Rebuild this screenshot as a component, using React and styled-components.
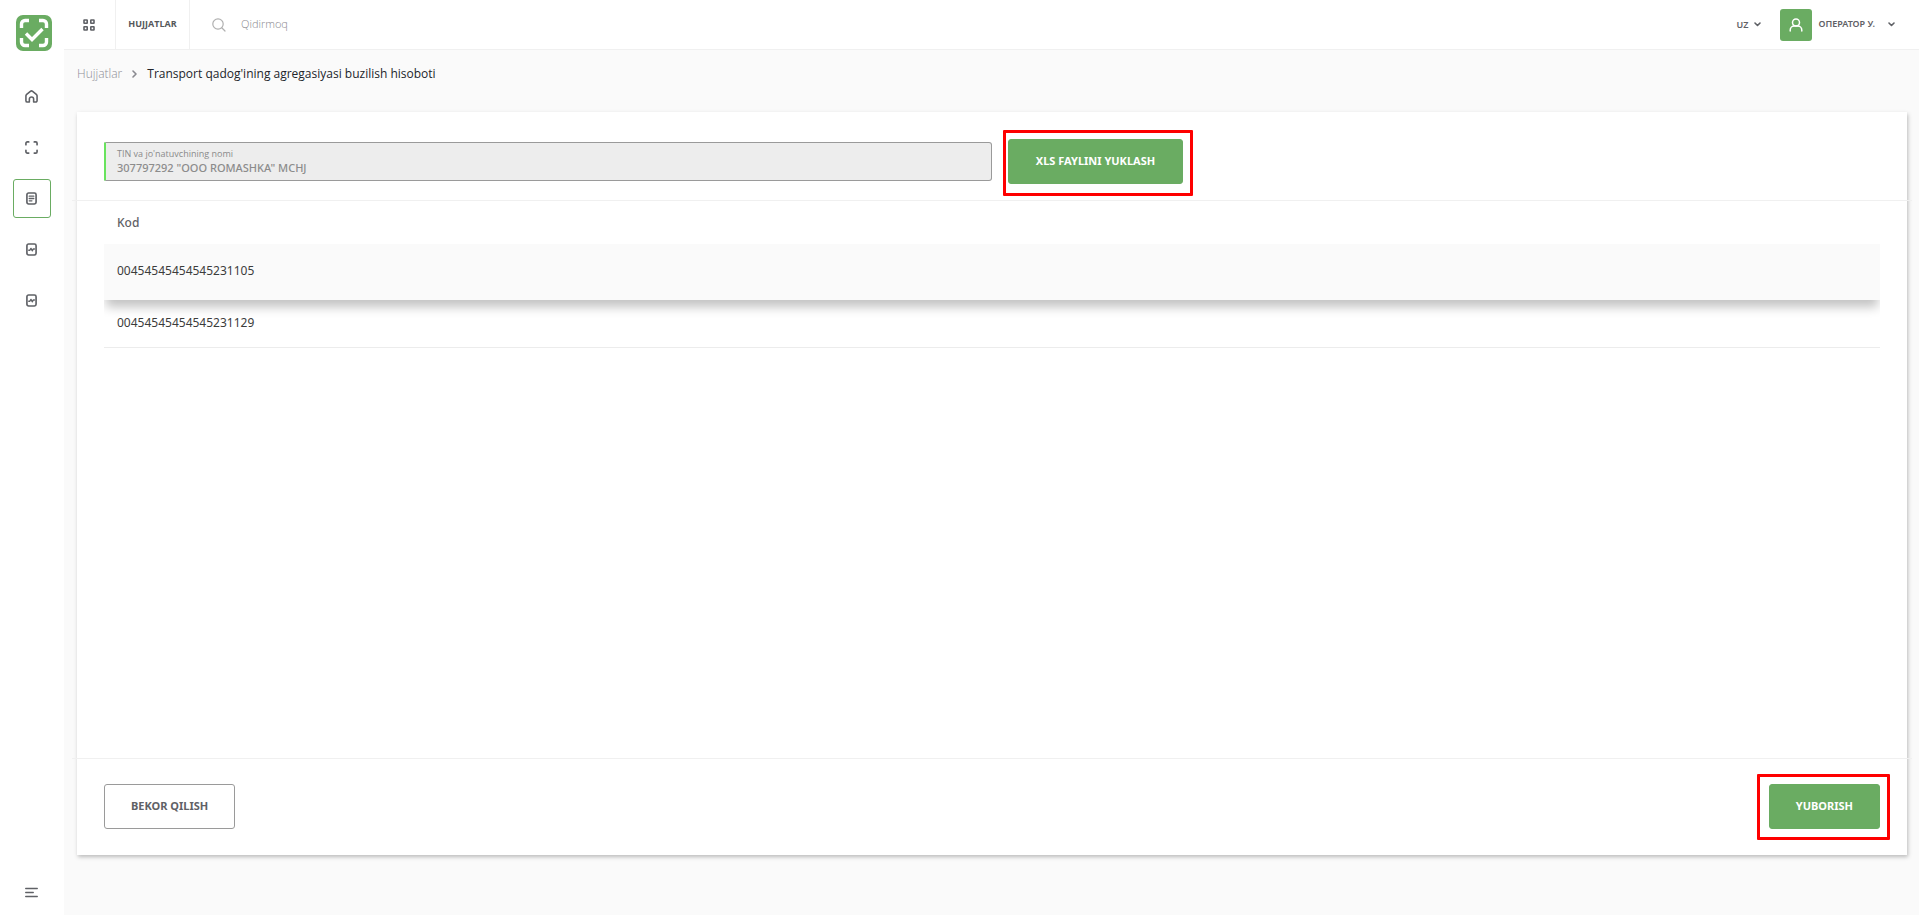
import React from "react";
import styled, { createGlobalStyle } from "styled-components";

const GlobalStyle = createGlobalStyle`
  * { box-sizing: border-box; }
  body {
    margin: 0;
    background: #fafafa;
    color: #3c3c3c;
    font-family: "Noto Sans", "Open Sans", sans-serif;
    font-size: 12px;
    line-height: 16px;
  }
  button, input { font-family: inherit; }
`;

const GREEN = "#6aac62";
const LIGHT_FONT = '"Open Sans", "Noto Sans", sans-serif';

const Page = styled.div`
  display: flex;
  min-height: 100vh;
`;

const Sidebar = styled.aside`
  display: flex;
  flex-direction: column;
  align-items: center;
  flex: 0 0 64px;
  padding: 15px 0 13px;
  background: #fff;
`;

const LogoLink = styled.a`
  display: block;
  height: 36px;
  margin: 0 0 26px 4px;
`;

const SideNav = styled.nav`
  display: flex;
  flex: 1;
  flex-direction: column;
  gap: 12px;
`;

const SideLink = styled.a`
  display: flex;
  align-items: center;
  justify-content: center;
  width: 38px;
  height: 39px;
  padding-right: 1px;
  border: 1px solid ${(p) => (p.$active ? GREEN : "transparent")};
  border-radius: 3px;
  color: #5f6166;
`;

const IconButton = styled.button`
  display: flex;
  align-items: center;
  justify-content: center;
  width: ${(p) => p.$width || 38}px;
  height: 20px;
  padding: 0 1px 0 0;
  border: 0;
  background: none;
  color: #5f6166;
`;

const Main = styled.div`
  display: flex;
  flex: 1;
  flex-direction: column;
  min-width: 0;
`;

const TopBar = styled.header`
  display: flex;
  height: 50px;
  background: #fff;
  border-bottom: 1px solid #f0f0f0;
`;

const TopCell = styled.div`
  display: flex;
  align-items: center;
  width: ${(p) => p.$width}px;
  justify-content: center;
  border-right: 1px solid #f0f0f0;
`;

const TopLink = styled.a`
  padding-bottom: 2px;
  color: #55575b;
  font-family: ${LIGHT_FONT};
  font-size: 9px;
  font-weight: 700;
  text-decoration: none;
`;

const Search = styled.label`
  display: flex;
  flex: 1;
  align-items: center;
  gap: 15px;
  padding-left: 22px;
  color: #b0b0b0;
`;

const SearchInput = styled.input`
  width: 300px;
  padding: 0 0 2px;
  border: 0;
  outline: 0;
  background: none;
  font-family: ${LIGHT_FONT};
  font-size: 11px;
  font-weight: 300;
  line-height: 16px;
  &::placeholder { color: #88888e; opacity: 1; }
`;

const TopMenu = styled.button`
  display: flex;
  align-items: center;
  gap: 6px;
  padding: 0;
  margin-right: ${(p) => p.$after}px;
  border: 0;
  background: none;
  color: #5f6166;
  font-size: 9px;
  font-weight: 600;
`;

const UserName = styled.span`
  padding: 0 7px 2px 0;
`;

const Avatar = styled.span`
  display: flex;
  align-items: center;
  justify-content: center;
  width: 32px;
  height: 32px;
  border-radius: 3px;
  background: ${GREEN};
  color: #fff;
`;

const Breadcrumbs = styled.nav`
  display: flex;
  align-items: center;
  height: 48px;
  margin-bottom: 14px;
  padding-left: 13px;
  gap: 9px;
  color: #22252b;
  font-family: ${LIGHT_FONT};
`;

const Crumb = styled.a`
  color: #8e8e96;
  font-weight: 300;
  text-decoration: none;
`;

const Card = styled.section`
  display: flex;
  flex: 1;
  flex-direction: column;
  margin: 0 12px 60px 13px;
  background: #fff;
  box-shadow: 1px 2px 4px rgba(0, 0, 0, 0.25);
`;

const Divider = styled.hr`
  height: 1px;
  margin: 0 -5px;
  border: 0;
  background: #f0f0f0;
`;

const CardHead = styled.div`
  display: grid;
  grid-template-columns: 1fr 1fr;
  align-items: center;
  height: 88px;
  padding: 17px 27px 6px;
`;

const Field = styled.label`
  display: flex;
  flex-direction: column;
  height: 39px;
  padding: 4px 11px 0;
  border: 1px solid #9a9a9a;
  border-left: 2px solid #69e35e;
  border-radius: 1px 3px 3px 1px;
  background: #ededed;
  color: #8a8a8a;
  font-family: ${LIGHT_FONT};
  font-size: 9px;
  line-height: 13px;
`;

const FieldInput = styled.input`
  height: 15px;
  padding: 0;
  border: 0;
  background: none;
  color: #8c8c8c;
  font-family: "Noto Sans", sans-serif;
  font-size: 11px;
  font-weight: 500;
  line-height: 15px;
`;

const Highlight = styled.div`
  position: relative;
  justify-self: start;
  margin-left: ${(p) => p.$left || 0}px;
  &::after {
    content: "";
    position: absolute;
    inset: ${(p) => p.$inset};
    border: 3px solid #fe0000;
    border-radius: 1px;
    pointer-events: none;
  }
`;

const Button = styled.button`
  min-width: ${(p) => (p.$wide ? 175 : 111)}px;
  height: 45px;
  padding: 0 26px 2px;
  border: 1px solid ${(p) => (p.$outlined ? "#9a9a9a" : GREEN)};
  border-radius: 3px;
  background: ${(p) => (p.$outlined ? "#fff" : GREEN)};
  color: ${(p) => (p.$outlined ? "#5f6166" : "#fff")};
  font-size: 11px;
  font-weight: 700;
`;

const TableArea = styled.div`
  flex: 1;
  margin: 0 27px;
  overflow: hidden;
`;

const Table = styled.table`
  width: 100%;
  border-spacing: 0;
`;

const HeadCell = styled.th`
  height: 43px;
  padding: 0 13px;
  color: #5f6166;
  font-weight: 500;
  text-align: left;
`;

const Row = styled.tr`
  position: relative;
  z-index: ${(p) => (p.$raised ? 1 : 0)};
  height: ${(p) => (p.$raised ? 56 : 48)}px;
  background: ${(p) => (p.$raised ? "#fafafa" : "#fff")};
  box-shadow: ${(p) =>
    p.$raised
      ? "0 9px 10px -2px rgba(0, 0, 0, 0.24)"
      : "inset 0 -1px 0 #ececec"};
`;

const Cell = styled.td`
  padding: 0 13px 2px;
`;

const CardFoot = styled.footer`
  display: flex;
  align-items: center;
  justify-content: space-between;
  height: 96px;
  padding: 0 27px 2px;
`;

const strokeProps = {
  fill: "none",
  stroke: "currentColor",
  strokeLinecap: "round",
  strokeLinejoin: "round",
};

const Logo = () => (
  <svg width="36" height="36" viewBox="0 0 36 36">
    <rect width="36" height="36" rx="7" fill={GREEN} />
    <g fill="none" stroke="#fff" strokeWidth="3.4">
      <path d="M5.500 13V9a3.500 3.500 0 0 1 3.500-3.500h4M23 5.500h4A3.500 3.500 0 0 1 30.500 9v4M30.500 23v4a3.500 3.500 0 0 1-3.500 3.500h-4M13 30.500H9A3.500 3.500 0 0 1 5.500 27v-4" />
      <path d="M10 18.500l6 6L26.500 14" />
    </g>
  </svg>
);

const HomeIcon = () => (
  <svg width="13" height="13" viewBox="0 0 14 14" {...strokeProps} strokeWidth="1.7">
    <path d="M1 6.200c0-.7.300-1.200.8-1.600l4-3.200a2 2 0 0 1 2.400 0l4 3.200c.5.400.8.900.8 1.600v5.300A1.500 1.500 0 0 1 11.500 13H9.300V9.800a2.300 2.300 0 0 0-4.600 0V13H2.500A1.500 1.500 0 0 1 1 11.500z" />
  </svg>
);

const ScanIcon = () => (
  <svg width="13" height="13" viewBox="0 0 14 14" {...strokeProps} strokeWidth="1.8">
    <path d="M1 4V2.500A1.500 1.500 0 0 1 2.500 1H4M10 1h1.500A1.500 1.500 0 0 1 13 2.500V4M13 10v1.500a1.500 1.500 0 0 1-1.500 1.500H10M4 13H2.500A1.500 1.500 0 0 1 1 11.500V10" />
  </svg>
);

const DocumentIcon = () => (
  <svg width="11" height="13" viewBox="0 0 12 14" {...strokeProps} strokeWidth="1.8">
    <rect x="1" y="1" width="10" height="12" rx="1.800" />
    <path d="M3.500 4.500h5M3.500 7h5M3.500 9.500h3" strokeWidth="1.400" />
  </svg>
);

const ReportIcon = () => (
  <svg width="11" height="13" viewBox="0 0 12 14" {...strokeProps} strokeWidth="1.8">
    <rect x="1" y="1" width="10" height="12" rx="1.800" />
    <path d="M3 7.800h1.200l1.200-2 1.400 2.600 1.200-2H9.200" strokeWidth="1.500" />
  </svg>
);

const MenuIcon = () => (
  <svg width="13" height="11" viewBox="0 0 13 11" {...strokeProps} strokeWidth="1.300">
    <path d="M.7 1.500h11.600M.7 5.500h7.600M.7 9.500h11.600" />
  </svg>
);

const AppsIcon = () => (
  <svg width="12" height="12" viewBox="0 0 12 12" {...strokeProps} strokeLinejoin="miter" strokeWidth="1.600">
    <rect x="1" y="1" width="3.200" height="3.200" rx=".3" />
    <rect x="7.800" y="1" width="3.200" height="3.200" rx=".3" />
    <rect x="1" y="7.800" width="3.200" height="3.200" rx=".3" />
    <rect x="7.800" y="7.800" width="3.200" height="3.200" rx=".3" />
  </svg>
);

const SearchIcon = () => (
  <svg width="14" height="14" viewBox="0 0 14 14" {...strokeProps} strokeWidth="1.200">
    <circle cx="6" cy="6" r="5.200" />
    <path d="M10 10l3 3" />
  </svg>
);

const UserIcon = () => (
  <svg width="14" height="14" viewBox="0 0 14 14" {...strokeProps} strokeWidth="1.500">
    <circle cx="7" cy="4.500" r="3.500" />
    <path d="M1.200 13v-.8C1.200 9.900 3 8 5.300 8h3.400c2.300 0 4.100 1.900 4.100 4.200v.8" />
  </svg>
);

const ChevronDown = () => (
  <svg width="7" height="5" viewBox="0 0 7 5" {...strokeProps} strokeWidth="1.600">
    <path d="M1 1l2.500 2.500L6 1" />
  </svg>
);

const ChevronRight = () => (
  <svg width="7" height="8" viewBox="0 0 7 8" {...strokeProps} stroke="#8a8a90" strokeWidth="1.600">
    <path d="M2 1l3 3-3 3" />
  </svg>
);

const sideItems = [
  { label: "Bosh sahifa", Icon: HomeIcon },
  { label: "Skanerlash", Icon: ScanIcon },
  { label: "Hujjatlar", Icon: DocumentIcon, active: true },
  { label: "Hisobotlar", Icon: ReportIcon },
  { label: "Hisobotlar arxivi", Icon: ReportIcon },
];

const codes = ["00454545454545231105", "00454545454545231129"];

export default function App() {
  return (
    <>
      <GlobalStyle />
      <Page>
        <Sidebar>
          <LogoLink href="#" aria-label="Logo">
            <Logo />
          </LogoLink>
          <SideNav>
            {sideItems.map(({ label, Icon, active }) => (
              <SideLink key={label} href="#" aria-label={label} $active={active}>
                <Icon />
              </SideLink>
            ))}
          </SideNav>
          <IconButton aria-label="Menyu">
            <MenuIcon />
          </IconButton>
        </Sidebar>
        <Main>
          <TopBar>
            <TopCell $width={52}>
              <IconButton $width={20} aria-label="Ilovalar">
                <AppsIcon />
              </IconButton>
            </TopCell>
            <TopCell $width={74}>
              <TopLink href="#">HUJJATLAR</TopLink>
            </TopCell>
            <Search>
              <SearchIcon />
              <SearchInput placeholder="Qidirmoq" aria-label="Qidirmoq" />
            </Search>
            <TopMenu $after={19}>
              UZ <ChevronDown />
            </TopMenu>
            <TopMenu $after={24}>
              <Avatar>
                <UserIcon />
              </Avatar>
              <UserName>ОПЕРАТОР У.</UserName>
              <ChevronDown />
            </TopMenu>
          </TopBar>
          <Breadcrumbs>
            <Crumb href="#">Hujjatlar</Crumb>
            <ChevronRight />
            <span>Transport qadog'ining agregasiyasi buzilish hisoboti</span>
          </Breadcrumbs>
          <Card>
            <CardHead>
              <Field>
                TIN va jo'natuvchining nomi
                <FieldInput disabled value={'307797292 "OOO ROMASHKA" MCHJ'} />
              </Field>
              <Highlight $left={16} $inset="-9px -10px -12px -5px">
                <Button $wide>XLS FAYLINI YUKLASH</Button>
              </Highlight>
            </CardHead>
            <Divider />
            <TableArea>
              <Table>
                <thead>
                  <tr>
                    <HeadCell scope="col">Kod</HeadCell>
                  </tr>
                </thead>
                <tbody>
                  {codes.map((code, i) => (
                    <Row key={code} $raised={i === 0}>
                      <Cell>{code}</Cell>
                    </Row>
                  ))}
                </tbody>
              </Table>
            </TableArea>
            <Divider />
            <CardFoot>
              <Button $outlined>BEKOR QILISH</Button>
              <Highlight $inset="-10px -10px -11px -12px">
                <Button>YUBORISH</Button>
              </Highlight>
            </CardFoot>
          </Card>
        </Main>
      </Page>
    </>
  );
}
